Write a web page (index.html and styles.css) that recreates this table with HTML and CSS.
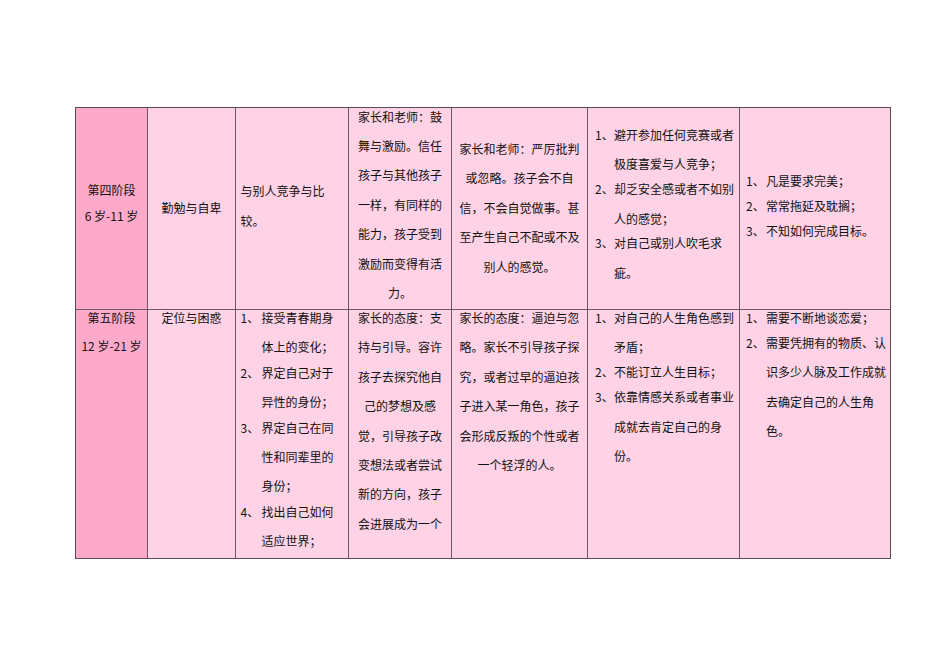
FILE: index.html
```html
<!DOCTYPE html>
<html lang="zh-CN">
<head>
<meta charset="utf-8">
<title>阶段表</title>
<link rel="stylesheet" href="styles.css">
</head>
<body>
<div class="page">
  <div class="table">
    <!-- Row 1 -->
    <div class="cell stage mid c">
      <p>第四阶段</p>
      <p>6 岁-11 岁</p>
    </div>
    <div class="cell col2 mid c">
      <p>勤勉与自卑</p>
    </div>
    <div class="cell col3 mid">
      <p>与别人竞争与比较。</p>
    </div>
    <div class="cell col4 mid c">
      <p>家长和老师：鼓舞与激励。信任孩子与其他孩子一样，有同样的能力，孩子受到激励而变得有活力。</p>
    </div>
    <div class="cell col5 mid c">
      <p>家长和老师：严厉批判或忽略。孩子会不自信，不会自觉做事。甚至产生自己不配或不及别人的感觉。</p>
    </div>
    <div class="cell col6 mid">
      <div class="item"><span class="num">1、</span><span class="txt">避开参加任何竞赛或者极度喜爱与人竞争；</span></div>
      <div class="item"><span class="num">2、</span><span class="txt">却乏安全感或者不如别人的感觉；</span></div>
      <div class="item"><span class="num">3、</span><span class="txt">对自己或别人吹毛求疵。</span></div>
    </div>
    <div class="cell col7 mid">
      <div class="item"><span class="num">1、</span><span class="txt">凡是要求完美；</span></div>
      <div class="item"><span class="num">2、</span><span class="txt">常常拖延及耽搁；</span></div>
      <div class="item"><span class="num">3、</span><span class="txt">不知如何完成目标。</span></div>
    </div>

    <!-- Row 2 -->
    <div class="cell stage top c">
      <p>第五阶段</p>
      <p>12 岁-21 岁</p>
    </div>
    <div class="cell col2 top c">
      <p>定位与困惑</p>
    </div>
    <div class="cell col3 top">
      <div class="item"><span class="num">1、</span><span class="txt">接受青春期身体上的变化；</span></div>
      <div class="item"><span class="num">2、</span><span class="txt">界定自己对于异性的身份；</span></div>
      <div class="item"><span class="num">3、</span><span class="txt">界定自己在同性和同辈里的身份；</span></div>
      <div class="item"><span class="num">4、</span><span class="txt">找出自己如何适应世界；</span></div>
    </div>
    <div class="cell col4 top c">
      <p>家长的态度：支持与引导。容许孩子去探究他自己的梦想及感觉，引导孩子改变想法或者尝试新的方向，孩子会进展成为一个</p>
    </div>
    <div class="cell col5 top c">
      <p>家长的态度：逼迫与忽略。家长不引导孩子探究，或者过早的逼迫孩子进入某一角色，孩子会形成反叛的个性或者一个轻浮的人。</p>
    </div>
    <div class="cell col6 top">
      <div class="item"><span class="num">1、</span><span class="txt">对自己的人生角色感到矛盾；</span></div>
      <div class="item"><span class="num">2、</span><span class="txt">不能订立人生目标；</span></div>
      <div class="item"><span class="num">3、</span><span class="txt">依靠情感关系或者事业成就去肯定自己的身份。</span></div>
    </div>
    <div class="cell col7 top">
      <div class="item"><span class="num">1、</span><span class="txt">需要不断地谈恋爱；</span></div>
      <div class="item"><span class="num">2、</span><span class="txt">需要凭拥有的物质、认识多少人脉及工作成就去确定自己的人生角色。</span></div>
    </div>
  </div>
</div>
</body>
</html>
```
FILE: styles.css
```css
html, body {
  margin: 0;
  padding: 0;
  background: #ffffff;
}

body {
  font-family: "Noto Sans CJK SC", "Noto Sans", sans-serif;
  font-size: 12px;
  color: #111111;
}

.page {
  padding: 107px 0 0 75px;
}

.table {
  display: grid;
  grid-template-columns: 71px 87px 112px 102px 135px 151px 150px;
  grid-template-rows: 201px 248px;
  gap: 1px;
  width: 814px;
  background: #6a5a63;
  border: 1px solid #5a4a53;
}

.cell {
  background: #ffd3e5;
  display: flex;
  flex-direction: column;
  line-height: 29.4px;
  padding: 0 4px;
}

.cell p {
  margin: 0;
}

.stage {
  background: #ffa9ca;
}

.stage.mid p {
  line-height: 26px;
}

.stage.top p {
  line-height: 28px;
}

.mid {
  justify-content: center;
}

.top {
  justify-content: flex-start;
}

.top > :first-child {
  margin-top: -7px;
}

.stage.top > :first-child {
  margin-top: -6px;
}

.c {
  text-align: center;
}

.col3 {
  padding-left: 4.5px;
  padding-right: 13px;
}

.col4 {
  padding-left: 6px;
  padding-right: 6px;
}

.col5 {
  padding-left: 6.5px;
  padding-right: 6.5px;
}

.col6 {
  padding-left: 7px;
  padding-right: 3px;
}

.col7 {
  padding-left: 6px;
  padding-right: 2px;
}

/* vertical offsets of the centred first row */
.stage.mid { padding-bottom: 12px; }
.col2.mid { padding-bottom: 2px; }
.col3.mid { padding-bottom: 6px; }
.col4.mid { padding-bottom: 8px; }
.col5.mid { padding-bottom: 2px; }
.col6.mid { padding-bottom: 10px; }
.col7.mid { padding-bottom: 6px; }

.item {
  display: flex;
}

.item + .item {
  margin-top: -4.5px;
}

.col3 .item + .item {
  margin-top: -4px;
}

.num {
  flex: none;
  width: 20px;
}

.col3 .num {
  width: 21px;
}

.col6 .num {
  width: 19px;
}

.txt {
  flex: 1;
  min-width: 0;
}
```
